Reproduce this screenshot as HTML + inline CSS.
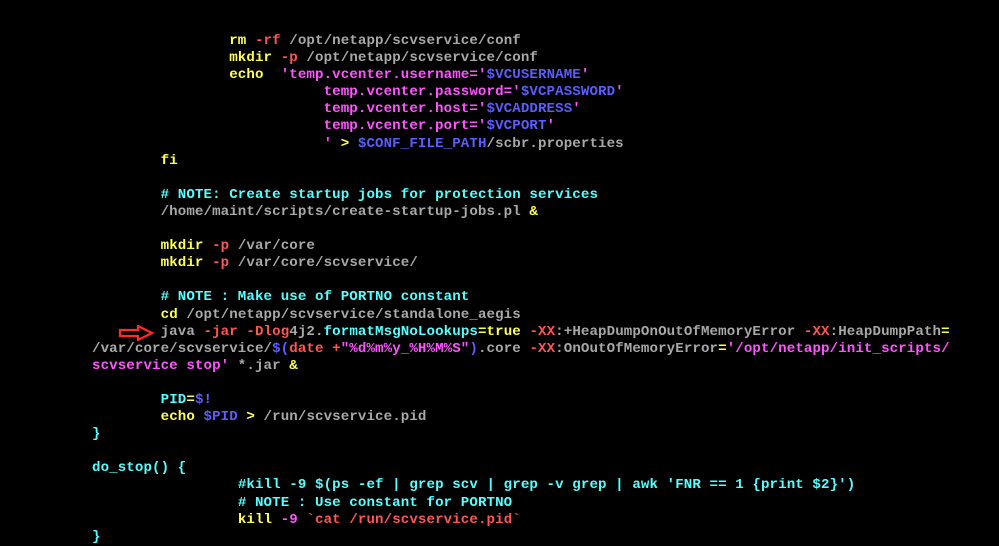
<!DOCTYPE html>
<html><head><meta charset="utf-8"><style>
html,body{margin:0;padding:0;background:#000;width:999px;height:545px;overflow:hidden}
pre{position:absolute;left:92px;top:33px;margin:0;font-family:"Liberation Mono",monospace;font-size:14.13px;letter-spacing:0.1px;line-height:17.1px;font-weight:bold;color:#a8a8a8}
.y{color:#ffff55}.r{color:#ff5555}.c{color:#55ffff}.m{color:#ff55ff}.b{color:#5c5cff}.g{color:#a8a8a8}
</style></head><body>
<pre>                <span class="y">rm</span> <span class="r">-rf</span> /opt/netapp/scvservice/conf
                <span class="y">mkdir</span> <span class="r">-p</span> /opt/netapp/scvservice/conf
                <span class="y">echo</span>  <span class="m">'temp.vcenter.username='</span><span class="b">$VCUSERNAME</span><span class="m">'</span>
                           <span class="m">temp.vcenter.password='</span><span class="b">$VCPASSWORD</span><span class="m">'</span>
                           <span class="m">temp.vcenter.host='</span><span class="b">$VCADDRESS</span><span class="m">'</span>
                           <span class="m">temp.vcenter.port='</span><span class="b">$VCPORT</span><span class="m">'</span>
                           <span class="m">'</span> <span class="y">&gt;</span> <span class="b">$CONF_FILE_PATH</span>/scbr.properties
        <span class="y">fi</span>

        <span class="c"># NOTE: Create startup jobs for protection services</span>
        /home/maint/scripts/create-startup-jobs.pl <span class="y">&amp;</span>

        <span class="y">mkdir</span> <span class="r">-p</span> /var/core
        <span class="y">mkdir</span> <span class="r">-p</span> /var/core/scvservice/

        <span class="c"># NOTE : Make use of PORTNO constant</span>
        <span class="y">cd</span> /opt/netapp/scvservice/standalone_aegis
        java <span class="r">-jar</span> <span class="r">-Dlog</span>4j2.<span class="c">formatMsgNoLookups</span><span class="y">=true</span> <span class="r">-XX</span>:+HeapDumpOnOutOfMemoryError <span class="r">-XX</span>:HeapDumpPath<span class="y">=</span>
/var/core/scvservice/<span class="b">$(</span><span class="r">date</span> <span class="r">+</span><span class="m">"%d%m%y_%H%M%S"</span><span class="b">)</span>.core <span class="r">-XX</span>:OnOutOfMemoryError<span class="y">=</span><span class="m">'/opt/netapp/init_scripts/</span>
<span class="m">scvservice stop'</span> *.jar <span class="y">&amp;</span>

        <span class="c">PID</span><span class="y">=</span><span class="b">$!</span>
        <span class="y">echo</span> <span class="b">$PID</span> <span class="y">&gt;</span> /run/scvservice.pid
<span class="c">}</span>

<span class="c">do_stop() {</span>
                 <span class="c">#kill -9 $(ps -ef | grep scv | grep -v grep | awk 'FNR == 1 {print $2}')</span>
                 <span class="c"># NOTE : Use constant for PORTNO</span>
                 <span class="y">kill</span> <span class="m">-9</span> <span class="r">`cat /run/scvservice.pid`</span>
<span class="c">}</span></pre>
<svg style="position:absolute;left:118px;top:325px" width="36" height="16" viewBox="0 0 36 16">
<path d="M2 5 H20 V1 L34 8 L20 15 V11 H2 Z" fill="none" stroke="#ff2a2a" stroke-width="2.2" stroke-linejoin="miter"/>
</svg>
</body></html>
